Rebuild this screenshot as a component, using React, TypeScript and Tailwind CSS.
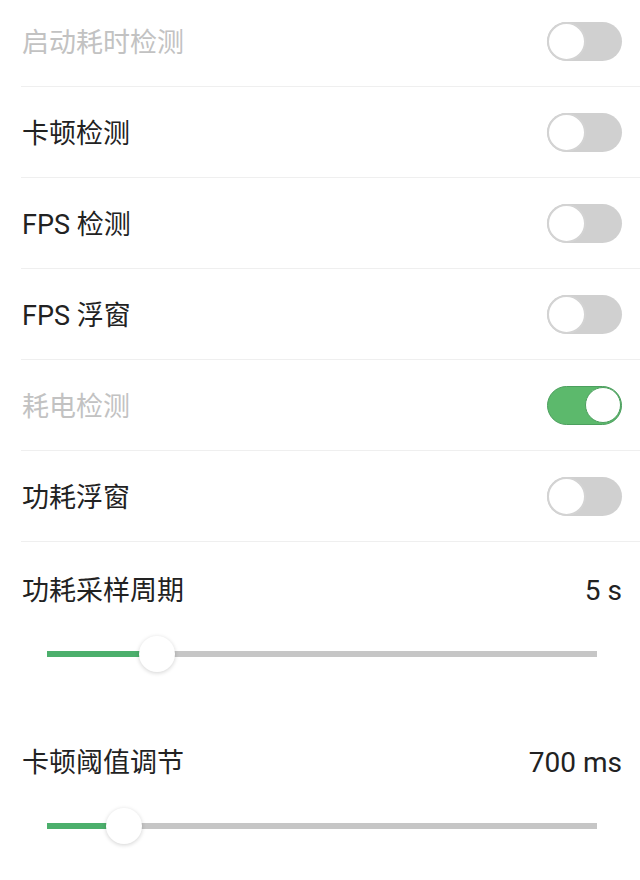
import React from "react";

const rows = [
  { label: "启动耗时检测", on: false, disabled: true },
  { label: "卡顿检测", on: false, disabled: false },
  { label: "FPS 检测", on: false, disabled: false },
  { label: "FPS 浮窗", on: false, disabled: false },
  { label: "耗电检测", on: true, disabled: true },
  { label: "功耗浮窗", on: false, disabled: false },
];

function Toggle({ on }: { on: boolean }) {
  if (on) {
    return (
      <div className="w-[75px] h-[39px] rounded-full bg-[#5cb96c] border-[1.5px] border-[#4c9f5e] flex items-center justify-end">
        <div className="w-[36px] h-[36px] rounded-full bg-white border-[1.5px] border-[#4c9f5e]" />
      </div>
    );
  }
  return (
    <div className="w-[75px] h-[39px] rounded-full bg-[#d0d0d0] flex items-center justify-start">
      <div className="w-[39px] h-[39px] rounded-full bg-white border-[2px] border-[#d3d3d3]" />
    </div>
  );
}

function Slider({ label, value, pct }: { label: string; value: string; pct: number }) {
  return (
    <div className="pl-[22px] pr-[18px] pb-[70px]">
      <div className="h-[36px] pt-[6px] flex items-center justify-between text-[27px] text-[#222]">
        <span>{label}</span>
        <span className="text-[28px]">{value}</span>
      </div>
      <div className="mt-[30px] h-[36px] pl-[25px] pr-[25px] flex items-center">
        <div className="relative flex-1 h-[6px] bg-[#c6c6c6]">
          <div className="absolute left-0 top-0 h-full bg-[#4caf6c]" style={{ width: `${pct}%` }} />
          <div
            className="absolute top-1/2 w-[36px] h-[36px] -translate-x-1/2 -translate-y-1/2 rounded-full bg-white shadow-[0_1px_4px_rgba(0,0,0,0.18)]"
            style={{ left: `${pct}%` }}
          />
        </div>
      </div>
    </div>
  );
}

export default function App() {
  return (
    <div
      className="w-[640px] h-[880px] bg-white overflow-hidden"
      style={{ fontFamily: 'Roboto, "Noto Sans CJK SC", sans-serif' }}
    >
      {rows.map((r, i) => (
        <div
          key={r.label}
          className={`ml-[21px] pr-[18px] flex items-center justify-between border-b border-[#efefef] ${
            i === 0 ? "h-[87px] pb-[4px]" : "h-[91px]"
          }`}
        >
          <span
            className={`pl-[1px] pt-[5px] text-[27px] ${r.disabled ? "text-[#c2c2c2]" : "text-[#222]"}`}
          >
            {r.label}
          </span>
          <Toggle on={r.on} />
        </div>
      ))}
      <div className="pt-[28px]">
        <Slider label="功耗采样周期" value="5 s" pct={20} />
        <Slider label="卡顿阈值调节" value="700 ms" pct={14} />
      </div>
    </div>
  );
}
